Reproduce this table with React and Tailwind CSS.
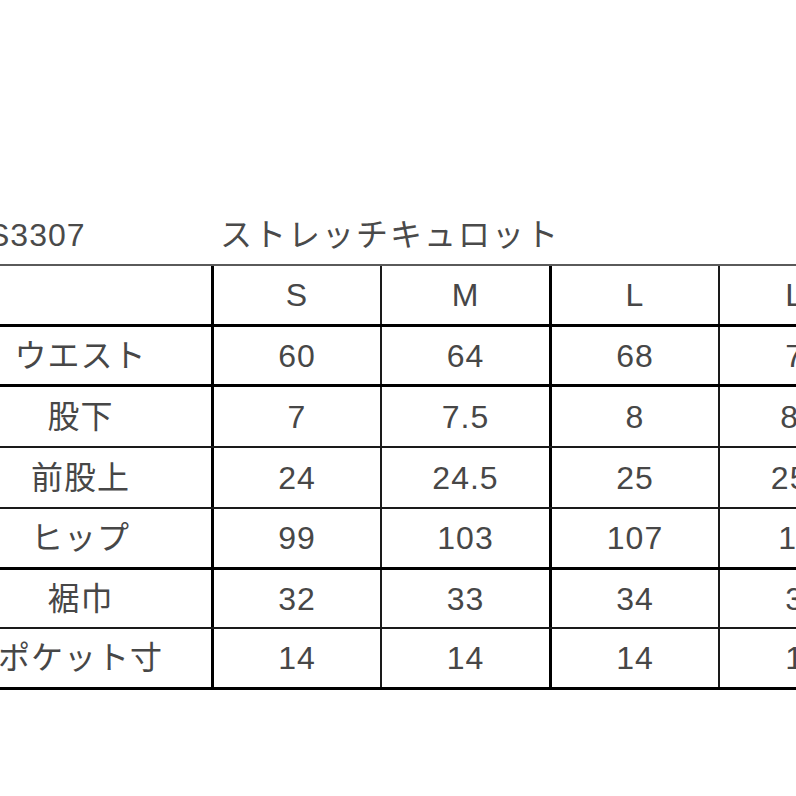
import React from 'react';

const sizes = ['S', 'M', 'L', 'LL'];

const rows = [
    { label: 'ウエスト', values: ['60', '64', '68', '72'], h: 'h-[60px]', line: 'border-b-[3px] border-black' },
    { label: '股下', values: ['7', '7.5', '8', '8.5'], h: 'h-[61px]', line: 'border-b-2 border-[#1a1a1a]' },
    { label: '前股上', values: ['24', '24.5', '25', '25.5'], h: 'h-[61px]', line: 'border-b-2 border-[#1a1a1a]' },
    { label: 'ヒップ', values: ['99', '103', '107', '111'], h: 'h-[61px]', line: 'border-b-[3px] border-black' },
    { label: '裾巾', values: ['32', '33', '34', '35'], h: 'h-[59px]', line: 'border-b-2 border-[#1a1a1a]' },
    { label: 'ポケット寸', values: ['14', '14', '14', '14'], h: 'h-[61px]', line: 'border-b-[3px] border-black' },
];

// widths of each column box, vertical rule on its right edge
const colClass = [
    'w-[264px] border-r-[3px] border-black',
    'w-[168px] border-r-2 border-[#1a1a1a]',
    'w-[170px] border-r-[3px] border-black',
    'w-[168px] border-r-2 border-[#1a1a1a]',
    'w-[170px] border-r-2 border-[#1a1a1a]',
];

const Row = ({ cells, h, line }) => (
    <div className={`flex shrink-0 ${h} ${line}`}>
        {cells.map((c, i) => (
            <div key={i} className={`shrink-0 flex items-center justify-center ${colClass[i]}`}>
                <span className="text-[32px] leading-none tracking-[1px] text-[#474747]">{c}</span>
            </div>
        ))}
    </div>
);

export default function App() {
    return (
        <div className="w-[796px] h-[796px] overflow-hidden bg-white" style={{ fontFamily: '"Liberation Sans", "Noto Sans CJK JP", sans-serif' }}>
            <div className="ml-[-50px] pt-[214px] w-[940px]">
                {/* title line */}
                <div className="flex items-center h-[42px] mb-[8px] text-[#4a4a4a]">
                    <div className="w-[270px] shrink-0 pl-[38px] text-[32px] leading-none tracking-[1px]">S3307</div>
                    <div className="text-[32px] leading-none tracking-[2px]">ストレッチキュロット</div>
                </div>

                {/* size table */}
                <div className="flex flex-col border-t-2 border-[#5a5a5a]">
                    <Row cells={['', ...sizes]} h="h-[61px]" line="border-b-[3px] border-black" />
                    {rows.map((r) => (
                        <Row key={r.label} cells={[r.label, ...r.values]} h={r.h} line={r.line} />
                    ))}
                </div>
            </div>
        </div>
    );
}
